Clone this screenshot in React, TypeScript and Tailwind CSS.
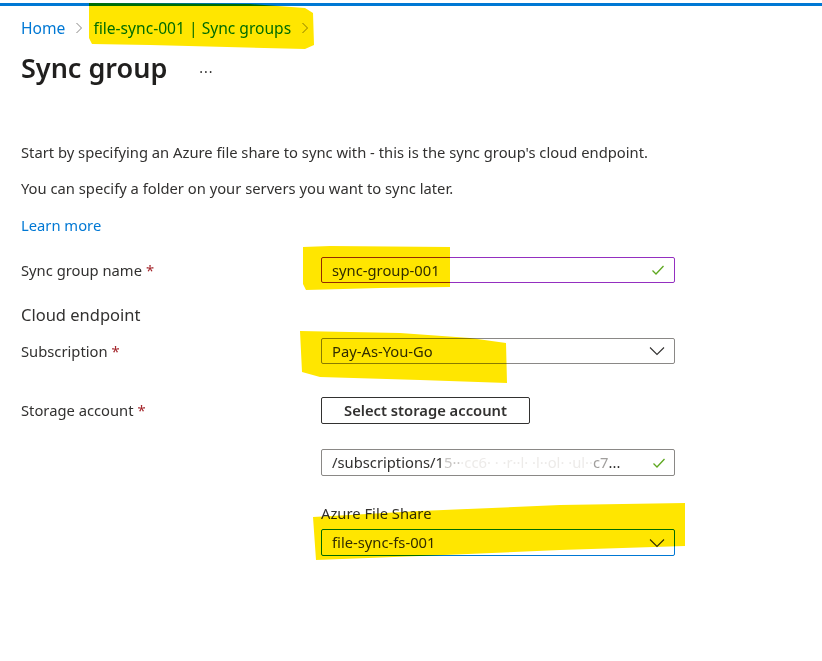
import React from 'react';

const font = { fontFamily: '"Noto Sans", "Open Sans", sans-serif' };

const Check = () => (
  <svg width="14" height="14" viewBox="0 0 14 14" className="shrink-0">
    <path d="M1.5 7.5 L5 11 L12.5 3" fill="none" stroke="#5ea820" strokeWidth="1.3" />
  </svg>
);

const ChevronDown = () => (
  <svg width="16" height="10" viewBox="0 0 16 10" className="shrink-0">
    <path d="M1 1.5 L8 8.5 L15 1.5" fill="none" stroke="#323130" strokeWidth="1.1" />
  </svg>
);

const Crumb = () => (
  <svg width="8" height="12" viewBox="0 0 8 12" className="mx-[10px]">
    <path d="M1.5 1 L6.5 6 L1.5 11" fill="none" stroke="#8a8886" strokeWidth="1" />
  </svg>
);

const Req = () => <span className="text-[#a4262c] ml-1">*</span>;

const Label: React.FC<{ children: React.ReactNode }> = ({ children }) => (
  <div className="w-[300px] shrink-0 text-[14.75px] text-[#323130]">{children}</div>
);

const Highlights = () => (
  <svg
    className="absolute inset-0 pointer-events-none mix-blend-multiply"
    width="822"
    height="661"
    viewBox="0 0 822 661"
  >
    <g fill="#ffe600">
      <path d="M89 3 L250 4 L305 8 L313 13 L314 45 L305 49 L150 45 L92 44 L89 38 Z" />
      <path d="M303 247 L330 246 L450 247 L450 287 L380 288 L306 290 L303 284 Z" />
      <path d="M300 331 L400 333 L470 338 L506 343 L507 383 L420 380 L320 377 L302 372 Z" />
      <path d="M313 517 L420 511 L560 505 L685 503 L685 546 L560 550 L420 556 L316 560 Z" />
    </g>
  </svg>
);

export default function App() {
  return (
    <div className="relative w-[822px] h-[661px] bg-white overflow-hidden text-[#323130]" style={font}>
      <div className="h-[3px] bg-white" />
      <div className="h-[3px] bg-[#0078d4]" />
      <div className="pl-[21px]">
        <nav className="mt-[12px] h-[20px] flex items-center text-[15.6px] leading-[20px]">
          <span className="text-[#0078d4]">Home</span>
          <Crumb />
          <span className="text-[#0078d4]">file-sync-001 | Sync groups</span>
          <Crumb />
        </nav>

        <div className="mt-[12px] h-[36px] flex items-center">
          <h1 className="text-[27px] leading-[36px] font-semibold text-[#201f1e]">Sync group</h1>
          <span className="ml-[32px] text-[14px] tracking-[1px] text-[#323130] -mt-[2px]">...</span>
        </div>

        <p className="mt-[56px] text-[14.75px] leading-[20px]">
          Start by specifying an Azure file share to sync with - this is the sync group's cloud endpoint.
        </p>
        <p className="mt-[16px] text-[14.75px] leading-[20px]">
          You can specify a folder on your servers you want to sync later.
        </p>
        <a className="mt-[17px] block text-[14.75px] leading-[20px] text-[#0078d4]">Learn more</a>

        <div className="mt-[22px] flex items-center h-[26px]">
          <Label>
            Sync group name<Req />
          </Label>
          <div className="w-[354px] h-[26px] border border-[#942fc0] rounded-[2px] flex items-center justify-between pl-[10px] pr-[9px] text-[14.75px]">
            <span>sync-group-001</span>
            <Check />
          </div>
        </div>

        <div className="mt-[21px] text-[16.5px] leading-[22px]">Cloud endpoint</div>

        <div className="mt-[12px] flex items-center h-[26px]">
          <Label>
            Subscription<Req />
          </Label>
          <div className="w-[354px] h-[26px] border border-[#8a8886] rounded-[2px] flex items-center justify-between pl-[10px] pr-[9px] text-[14.75px]">
            <span>Pay-As-You-Go</span>
            <ChevronDown />
          </div>
        </div>

        <div className="mt-[33px] flex items-center h-[27px]">
          <Label>
            Storage account<Req />
          </Label>
          <button className="w-[209px] h-[27px] border border-[#323130] rounded-[2px] text-[14.75px] font-semibold text-[#323130] bg-white">
            Select storage account
          </button>
        </div>

        <div className="mt-[25px] flex items-center h-[27px]">
          <div className="w-[300px] shrink-0" />
          <div className="w-[354px] h-[27px] border border-[#8a8886] rounded-[2px] flex items-center justify-between pl-[10px] pr-[8px] text-[14.75px]">
            <span className="whitespace-nowrap">
              /subscriptions/1<span className="text-[#c8c6c4]">5··</span>
              <span className="text-[#edebe9]">·cc6· · ·r··l· ·l··ol· ·ul··</span>
              <span className="text-[#a19f9d]">c7</span>...
            </span>
            <Check />
          </div>
        </div>

        <div className="mt-[27px] flex">
          <div className="w-[300px] shrink-0" />
          <div className="text-[14.75px] leading-[20px]">Azure File Share</div>
        </div>

        <div className="mt-[6px] flex items-center h-[27px]">
          <div className="w-[300px] shrink-0" />
          <div className="w-[354px] h-[27px] border border-[#0078d4] rounded-[2px] flex items-center justify-between pl-[10px] pr-[9px] text-[14.75px]">
            <span>file-sync-fs-001</span>
            <ChevronDown />
          </div>
        </div>
      </div>
      <Highlights />
    </div>
  );
}
